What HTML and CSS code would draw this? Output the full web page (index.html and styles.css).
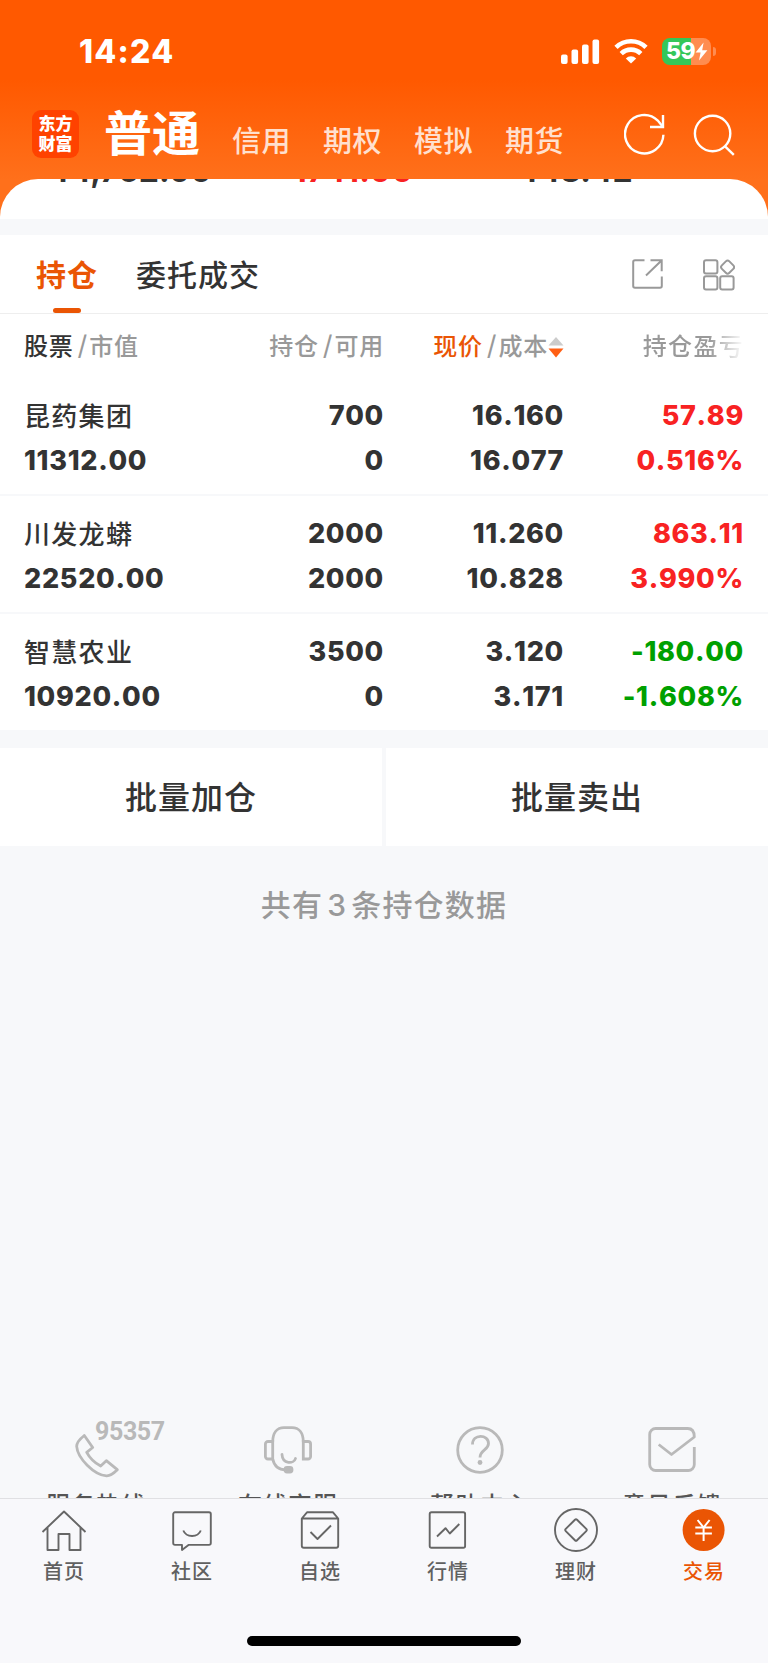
FILE: index.html
```html
<!DOCTYPE html>
<html lang="zh-CN">

<head>
    <meta charset="UTF-8">
    <meta name="viewport" content="width=device-width, initial-scale=1.0">
    <title>交易 - 持仓</title>
    <link rel="stylesheet" href="styles.css">
</head>

<body>
    <div class="app">
        <header class="top">
            <div class="status-bar">
                <span class="time">14:24</span>
                <div class="status-icons">
                    <svg class="signal" width="39" height="25" viewBox="0 0 39 25" fill="#fff">
                        <rect x="0" y="15.5" width="6.6" height="9.5" rx="2" />
                        <rect x="10.5" y="10.5" width="6.6" height="14.5" rx="2" />
                        <rect x="21" y="5.5" width="6.6" height="19.5" rx="2" />
                        <rect x="31.5" y="0.5" width="6.6" height="24.5" rx="2" />
                    </svg>
                    <svg class="wifi" width="34" height="25" viewBox="0 0 34 25" fill="none" stroke="#fff">
                        <path d="M2 8.4a21.5 21.5 0 0 1 30 0" stroke-width="4.6" />
                        <path d="M7.2 14.6a14 14 0 0 1 19.6 0" stroke-width="4.6" />
                        <path d="M11.8 19.4a7.4 7.4 0 0 1 10.4 0L17 24.6z" fill="#fff" stroke="none" />
                    </svg>
                    <div class="battery">
                        <div class="battery-body">
                            <span>59</span>
                            <svg width="13" height="19" viewBox="0 0 13 19" fill="#fff">
                                <path d="M8.6.6L.6 10.6h5L4 18.4l8.4-10.2H7.2z" />
                            </svg>
                        </div>
                        <div class="battery-cap"></div>
                    </div>
                </div>
            </div>
            <nav class="account-bar">
                <div class="logo"><span>东方</span><span>财富</span></div>
                <div class="account-tabs">
                    <span class="active">普通</span>
                    <span>信用</span>
                    <span>期权</span>
                    <span>模拟</span>
                    <span>期货</span>
                </div>
                <svg class="refresh" width="42" height="42" viewBox="0 0 42 42" fill="none" stroke="#fff" stroke-width="2.4">
                    <path d="M39.4 21.8A19.2 19.2 0 1 1 33.8 7.6L38.6 13.6" />
                    <path d="M39 2V14H26" />
                </svg>
                <svg class="search" width="42" height="42" viewBox="0 0 42 42" fill="none" stroke="#fff" stroke-width="2.4">
                    <circle cx="19.6" cy="19.5" r="17.7" />
                    <path d="M31.8 32.2l9 8.6" />
                </svg>
            </nav>
        </header>

        <section class="summary">
            <span>44,752.00</span>
            <span class="up">1741.00</span>
            <span>443.42</span>
        </section>

        <section class="positions">
            <div class="tabs">
                <span class="tab active">持仓</span>
                <span class="tab">委托成交</span>
                <svg class="share" width="31" height="31" viewBox="0 0 31 31" fill="none" stroke="#999" stroke-width="2">
                    <path d="M12.5 1.2H3A1.8 1.8 0 0 0 1.2 3v24A1.8 1.8 0 0 0 3 28.8h25a1.8 1.8 0 0 0 1.8-1.8v-9.5" />
                    <path d="M18.5 1.2h11.2v11M29.5 1.5L14 16.5" />
                </svg>
                <svg class="grid" width="32" height="32" viewBox="0 0 32 32" fill="none" stroke="#999" stroke-width="2">
                    <rect x="1" y="1.2" width="13.4" height="13.4" rx="2" />
                    <rect x="1" y="17.2" width="13.4" height="13.4" rx="2" />
                    <rect x="17.2" y="17.2" width="13.4" height="13.4" rx="2" />
                    <rect x="19.3" y="2.8" width="10.6" height="10.6" rx="2.5" transform="rotate(45 24.6 8.1)" />
                </svg>
            </div>

            <div class="row head">
                <div><b>股票</b><i>/</i>市值</div>
                <div>持仓<i>/</i>可用</div>
                <div><b class="sorted">现价</b><i>/</i>成本<svg class="sort" width="16" height="22" viewBox="0 0 16 22">
                        <path d="M8 1L15.5 9.5H.5z" fill="#ccc" />
                        <path d="M8 21.5L.5 12.5h15z" fill="#ff5f14" />
                    </svg></div>
                <div class="fade">持仓盈亏</div>
            </div>
            <div class="row">
                <div><span class="name">昆药集团</span><span>11312.00</span></div>
                <div><span>700</span><span>0</span></div>
                <div><span>16.160</span><span>16.077</span></div>
                <div class="up"><span>57.89</span><span>0.516%</span></div>
            </div>
            <div class="row">
                <div><span class="name">川发龙蟒</span><span>22520.00</span></div>
                <div><span>2000</span><span>2000</span></div>
                <div><span>11.260</span><span>10.828</span></div>
                <div class="up"><span>863.11</span><span>3.990%</span></div>
            </div>
            <div class="row">
                <div><span class="name">智慧农业</span><span>10920.00</span></div>
                <div><span>3500</span><span>0</span></div>
                <div><span>3.120</span><span>3.171</span></div>
                <div class="down"><span>-180.00</span><span>-1.608%</span></div>
            </div>
        </section>

        <div class="batch">
            <button type="button">批量加仓</button>
            <button type="button">批量卖出</button>
        </div>
        <p class="total">共有<span>3</span>条持仓数据</p>

        <section class="services">
            <div class="service">
                <div class="service-icon hotline">
                    <svg width="44" height="44" viewBox="0 0 44 44" fill="none" stroke="#b9b9b9" stroke-width="2.8" stroke-linejoin="round">
                        <path d="M9.3 1.5C5.5 4.5 1.5 8 1.7 12.5C2.5 24 19 41 31.5 41.8C35.5 42 39.5 38.5 42.3 35.7L31.3 26.7L25.7 32C20 29 14.5 23.5 11.7 18.3L17.7 13.5z" />
                    </svg>
                    <em>95357</em>
                </div>
                <span>服务热线</span>
            </div>
            <div class="service">
                <div class="service-icon">
                    <svg width="48" height="48" viewBox="0 0 48 48" fill="none" stroke="#b9b9b9" stroke-width="2.8" stroke-linecap="round">
                        <path d="M8.7 15.5H4a2.6 2.6 0 0 0-2.6 2.6v12.2A2.6 2.6 0 0 0 4 33h4.7z" />
                        <path d="M39.3 15.5H44a2.6 2.6 0 0 1 2.6 2.6v12.2A2.6 2.6 0 0 1 44 33h-4.7z" />
                        <path d="M8.7 16C8.7 7 13 1.7 20 1.7h8C35 1.7 39.3 7 39.3 16M8.7 33c1.5 7 6.3 10.8 13 10.8" />
                        <path d="M18 28.5c.5 10 12 9.500 13.5 4" />
                        <rect x="21" y="41.5" width="7" height="4.6" rx="2" fill="#b9b9b9" />
                    </svg>
                </div>
                <span>在线客服</span>
            </div>
            <div class="service">
                <div class="service-icon">
                    <svg width="48" height="48" viewBox="0 0 48 48" fill="none" stroke="#b9b9b9" stroke-width="2.8">
                        <circle cx="24" cy="24" r="22.3" />
                        <path d="M16.5 18.5c0-11 16-10.5 16-1 0 6.5-8.5 6.5-8.5 14" />
                        <circle cx="24" cy="36.5" r="2.4" fill="#b9b9b9" stroke="none" />
                    </svg>
                </div>
                <span>帮助中心</span>
            </div>
            <div class="service">
                <div class="service-icon">
                    <svg width="48" height="48" viewBox="0 0 48 48" fill="none" stroke="#b9b9b9" stroke-width="2.8" stroke-linejoin="round">
                        <path d="M46.3 21v17.5a6 6 0 0 1-6 6H7.7a6 6 0 0 1-6-6v-30a6 6 0 0 1 6-6h32c4 0 6.6 3 6.6 8.5L23.5 28.5L10.7 18.5" />
                    </svg>
                </div>
                <span>意见反馈</span>
            </div>
        </section>

        <footer class="tabbar">
            <div class="tab-item">
                <svg width="46" height="46" viewBox="0 0 46 46" fill="none" stroke="#666" stroke-width="1.9">
                    <path d="M1.5 24L23 3.5L44.5 24M6.5 19.5V42H17.5V26H28.5V42H39.5V19.5" stroke-linejoin="round" />
                </svg>
                <span>首页</span>
            </div>
            <div class="tab-item">
                <svg width="46" height="46" viewBox="0 0 46 46" fill="none" stroke="#666" stroke-width="1.9" stroke-linejoin="round">
                    <path d="M6 4.3h34a1.8 1.8 0 0 1 1.8 1.8v29a1.8 1.8 0 0 1-1.8 1.8H19.5L13 42v-5.1H6a1.8 1.8 0 0 1-1.8-1.8v-29A1.8 1.8 0 0 1 6 4.3z" />
                    <path d="M14.3 22.5c3 7.3 14.5 7.3 17.5 0" />
                </svg>
                <span>社区</span>
            </div>
            <div class="tab-item">
                <svg width="46" height="46" viewBox="0 0 46 46" fill="none" stroke="#666" stroke-width="1.9" stroke-linejoin="round">
                    <path d="M4.8 10.5L10 4.3h26l5.2 6.2v27.2a2 2 0 0 1-2 2H6.8a2 2 0 0 1-2-2zM4.8 10.5h36.4" />
                    <path d="M13.5 24l7 7L34 17.5" />
                </svg>
                <span>自选</span>
            </div>
            <div class="tab-item">
                <svg width="46" height="46" viewBox="0 0 46 46" fill="none" stroke="#666" stroke-width="1.9" stroke-linejoin="round">
                    <rect x="4.7" y="4.3" width="35.4" height="35.4" rx="1.8" />
                    <path d="M12 28.5l8.5-8.3 4.3 5.3 9.5-9.5" />
                </svg>
                <span>行情</span>
            </div>
            <div class="tab-item">
                <svg width="46" height="46" viewBox="0 0 46 46" fill="none" stroke="#666" stroke-width="1.9" stroke-linejoin="round">
                    <circle cx="23" cy="22" r="21" />
                    <rect x="15" y="14" width="16" height="16" rx="1.5" transform="rotate(45 23 22)" />
                </svg>
                <span>理财</span>
            </div>
            <div class="tab-item active">
                <svg width="46" height="46" viewBox="0 0 46 46" fill="none" stroke="#fff" stroke-width="2">
                    <circle cx="22.6" cy="22" r="21" fill="#ea5504" stroke="none" />
                    <path d="M16.6 12l6 7.5 6-7.5M22.6 19v14M14.3 19.5h16.6M14.3 25.5h16.6" />
                </svg>
                <span>交易</span>
            </div>
            <div class="home-indicator"></div>
        </footer>
    </div>
</body>

</html>
```
FILE: styles.css
```css
* {
    margin: 0;
    padding: 0;
    box-sizing: border-box;
}

body {
    background: #f7f8fa;
    color: #333;
    font-family: Inter, "Noto Sans CJK SC", sans-serif;
}

svg {
    display: block;
    flex: none;
}

.app {
    display: flex;
    flex-direction: column;
    height: 1663px;
    overflow: hidden;
    background: linear-gradient(#ff5900 80px, #ff701b 180px, #ff701b 219px, #f7f8fa 219px);
}

/* Header */
.top {
    height: 179px;
    flex: none;
    color: #fff;
}

.status-bar {
    display: flex;
    justify-content: space-between;
    height: 103px;
    padding: 0 52px 0 79px;
}

.time {
    font-size: 32px;
    font-weight: 800;
    letter-spacing: 1.2px;
    line-height: 103px;
}

.status-icons {
    display: flex;
    align-items: center;
    height: 102px;
}

.wifi {
    margin: 0 14px;
}

.battery {
    display: flex;
    align-items: center;
    gap: 2px;
}

.battery-body {
    display: flex;
    align-items: center;
    width: 49px;
    height: 27px;
    padding-left: 4px;
    border-radius: 8px;
    background: linear-gradient(90deg, #34c759 59%, #ff8c50 59%);
    font-size: 23px;
    font-weight: 800;
    letter-spacing: -0.5px;
}

.battery-cap {
    width: 3px;
    height: 9px;
    border-radius: 0 4px 4px 0;
    background: #ff8c50;
}

.account-bar {
    display: flex;
    height: 76px;
    padding-left: 32px;
}

.logo {
    display: flex;
    flex-direction: column;
    align-items: center;
    justify-content: center;
    width: 47px;
    height: 48px;
    margin-top: 7px;
    border-radius: 9px;
    background: #ff4200;
    font-size: 17px;
    font-weight: 900;
    line-height: 20px;
}

.account-tabs {
    display: flex;
    align-items: baseline;
    width: 544px;
    padding-left: 25px;
}

.account-tabs span {
    position: relative;
    top: 1px;
    width: 91px;
    font-size: 29px;
    font-weight: 500;
    letter-spacing: 0.4px;
    line-height: 40px;
    color: #ffe0cf;
}

.account-tabs .active {
    top: 0;
    width: 128px;
    font-size: 48px;
    font-weight: 700;
    letter-spacing: 0;
    line-height: 62px;
    color: #fff;
}

.refresh {
    margin: 10px 0 0 1px;
}

.search {
    margin: 11px 0 0 27px;
}

/* Account summary, scrolled up under the header */
.summary {
    display: flex;
    height: 40px;
    flex: none;
    overflow: hidden;
    border-radius: 38px 38px 0 0;
    background: #fff;
    font-size: 32px;
    font-weight: 700;
    line-height: 40px;
    padding-left: 48px;
}

.summary span {
    width: 235px;
    margin-top: -28px;
}

.summary .up {
    width: 234px;
    padding-left: 10px;
    letter-spacing: 0.4px;
}

.up {
    color: #f82222;
}

.down {
    color: #00a000;
}

/* Positions */
.positions {
    margin-top: 16px;
    background: #fff;
}

.tabs {
    display: flex;
    height: 79px;
    padding: 0 33px 0 36px;
    border-bottom: 1px solid #eee;
}

.tab {
    position: relative;
    margin-right: 38px;
    font-size: 30px;
    font-weight: 500;
    letter-spacing: 1px;
    line-height: 81px;
}

.tab.active {
    color: #ea5504;
    font-weight: 700;
}

.tab.active::after {
    content: "";
    position: absolute;
    left: 17px;
    bottom: 0;
    width: 28px;
    height: 5px;
    border-radius: 3px;
    background: #ea5504;
}

.share {
    margin: 24px 40px 0 auto;
}

.grid {
    margin-top: 24px;
}

.row {
    display: grid;
    grid-template-columns: 178px 182px 180px 180px;
    height: 118px;
    padding: 15px 24px 0;
    border-bottom: 2px solid #f7f8fa;
    font-size: 27px;
    font-weight: 800;
    font-kerning: none;
    letter-spacing: 0.7px;
    line-height: 45px;
}

.row > div {
    text-align: right;
    white-space: nowrap;
}

.row > div:first-child {
    text-align: left;
}

.row span {
    display: block;
}

.row .name {
    padding-top: 2px;
    font-size: 26px;
    font-weight: 500;
    letter-spacing: 1.3px;
    line-height: 43px;
}

.row.head {
    height: 64px;
    padding-top: 9px;
    border: 0;
    color: #999;
    font-size: 24px;
    font-weight: 500;
    letter-spacing: 0.8px;
}

.row b {
    color: #333;
    font-weight: 500;
}

.row .sorted {
    color: #ea5504;
}

.row i {
    margin: 0 1px 0 4px;
    font-size: 27px;
    font-style: normal;
    font-weight: 400;
}

.sort {
    display: inline-block;
    vertical-align: -3px;
}

.row .fade {
    padding-top: 1px;
    background: linear-gradient(90deg, #999 145px, #fff 180px);
    background-clip: text;
    color: transparent;
    letter-spacing: 1.3px;
}

/* Batch actions */
.batch {
    display: flex;
    gap: 4px;
    margin-top: 16px;
}

.batch button {
    flex: 1;
    height: 98px;
    padding-top: 1px;
    border: 0;
    background: #fff;
    color: #333;
    font: 500 32px/97px Inter, "Noto Sans CJK SC", sans-serif;
    letter-spacing: 1px;
}

.total {
    margin-top: 37px;
    color: #999;
    font-size: 30px;
    font-weight: 500;
    letter-spacing: 1.2px;
    line-height: 44px;
    text-align: center;
}

.total span {
    margin: 0 4px;
}

/* Service links, cut off by the tab bar */
.services {
    display: flex;
    height: 77px;
    margin-top: auto;
    overflow: hidden;
}

.service {
    display: flex;
    flex: 1;
    flex-direction: column;
    align-items: center;
    color: #555;
    font-size: 24px;
    font-weight: 500;
    letter-spacing: 1px;
    line-height: 30px;
}

.service-icon {
    height: 70px;
    flex: none;
    padding-top: 5px;
}

.service > span {
    flex: none;
}

.hotline {
    display: flex;
    align-self: flex-start;
    padding: 13px 0 0 75px;
}

.hotline em {
    margin: -14px 0 0 -24px;
    color: #b9b9b9;
    font: 700 25px/24px Roboto, sans-serif;
    letter-spacing: -0.4px;
}

/* Bottom tab bar */
.tabbar {
    display: flex;
    flex-wrap: wrap;
    align-content: flex-start;
    justify-content: center;
    height: 165px;
    flex: none;
    border-top: 1px solid #e0e0e3;
    background: #f8f8fb;
}

.tab-item {
    display: flex;
    flex-direction: column;
    align-items: center;
    width: 128px;
    height: 137px;
    padding-top: 9px;
    color: #606060;
    font-size: 20px;
    font-weight: 500;
    letter-spacing: 1px;
    line-height: 36px;
}

.tab-item.active {
    color: #ea5504;
}

.home-indicator {
    width: 274px;
    height: 10px;
    border-radius: 5px;
    background: #000;
}
```
